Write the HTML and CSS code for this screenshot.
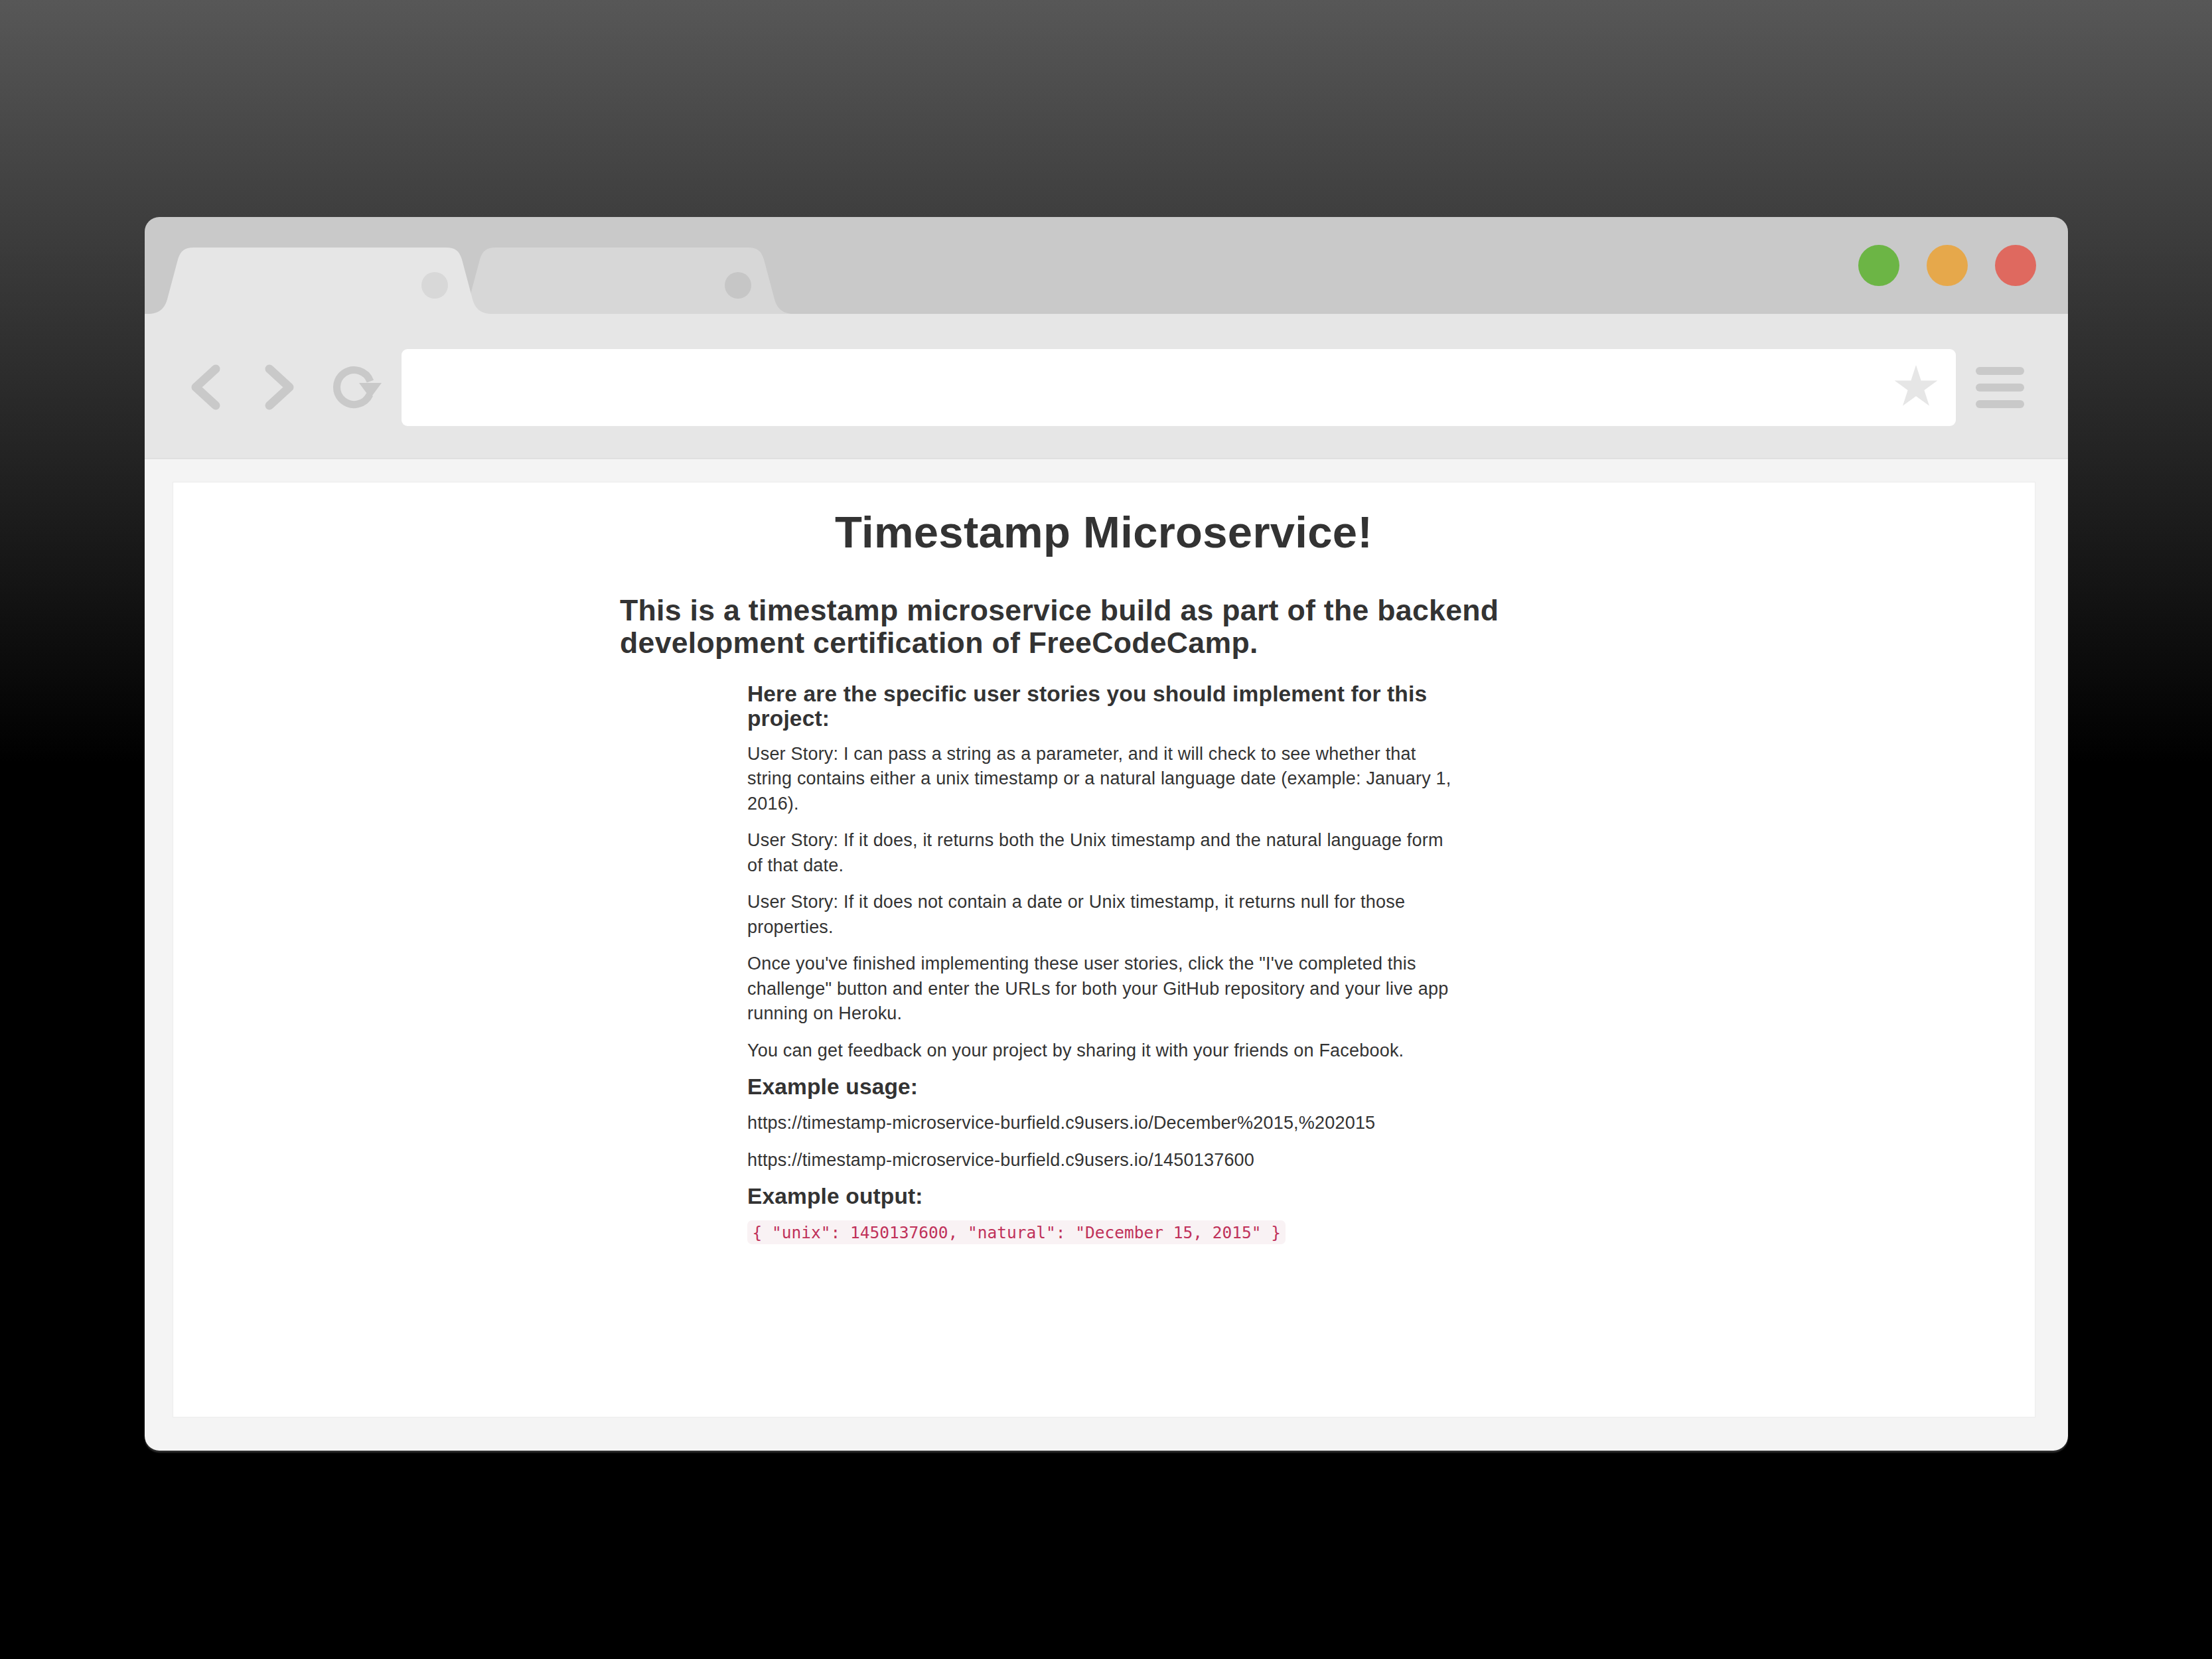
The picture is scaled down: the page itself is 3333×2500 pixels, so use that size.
FILE: index.html
```html
<!DOCTYPE html>
<html lang="en">
<head>
<meta charset="utf-8">
<title>Timestamp Microservice</title>
<link rel="stylesheet" href="styles.css">
</head>
<body>
<div class="window">
  <div class="tabbar">
    <svg class="tabs" width="1000" height="100" viewBox="0 0 1000 100">
      <path class="tab-back" transform="translate(455 0)" d="M4 100 C22 100 30 92 34 78 L50 18 C54 5 60 0 74 0 L454 0 C468 0 474 5 478 18 L494 78 C498 92 506 100 524 100 Z"/>
      <path class="tab-front" d="M4 100 C22 100 30 92 34 78 L50 18 C54 5 60 0 74 0 L454 0 C468 0 474 5 478 18 L494 78 C498 92 506 100 524 100 Z"/>
      <circle class="dot-front" cx="437" cy="57" r="20"/>
      <circle class="dot-back" cx="894" cy="57" r="20"/>
    </svg>
    <div class="lights">
      <span class="light green"></span>
      <span class="light yellow"></span>
      <span class="light red"></span>
    </div>
  </div>
  <div class="toolbar">
    <svg class="nav" width="300" height="80" viewBox="0 0 300 80">
      <polyline class="navline" points="40,12 10,39.5 40,67"/>
      <polyline class="navline" points="121,12 151,39.5 121,67"/>
      <path class="reload" d="M272.1 50.5 A26 26 0 1 1 272.9 30.6"/>
      <polygon class="reload-head" points="256,33 290,33 273,56"/>
    </svg>
    <div class="address">
      <svg class="star" width="70" height="70" viewBox="0 0 70 70">
        <polygon points="35,1 42.6,24.5 67.3,24.5 47.4,39 55,62.5 35,48 15,62.5 22.6,39 2.7,24.5 27.4,24.5"/>
      </svg>
    </div>
    <svg class="menu" width="73" height="62" viewBox="0 0 73 62">
      <line x1="6" y1="6" x2="67" y2="6"/>
      <line x1="6" y1="31" x2="67" y2="31"/>
      <line x1="6" y1="56" x2="67" y2="56"/>
    </svg>
  </div>
  <div class="viewport">
    <div class="page">
      <h1 class="title">Timestamp Microservice!</h1>
      <div class="intro">
        <h3 class="lead">This is a timestamp microservice build as part of the backend development certification of FreeCodeCamp.</h3>
      </div>
      <div class="details">
        <h4 class="sub">Here are the specific user stories you should implement for this project:</h4>
        <p class="text">User Story: I can pass a string as a parameter, and it will check to see whether that string contains either a unix timestamp or a natural language date (example: January 1, 2016).</p>
        <p class="text">User Story: If it does, it returns both the Unix timestamp and the natural language form of that date.</p>
        <p class="text">User Story: If it does not contain a date or Unix timestamp, it returns null for those properties.</p>
        <p class="text">Once you've finished implementing these user stories, click the "I've completed this challenge" button and enter the URLs for both your GitHub repository and your live app running on Heroku.</p>
        <p class="text">You can get feedback on your project by sharing it with your friends on Facebook.</p>
        <h4 class="sub">Example usage:</h4>
        <p class="text">https://timestamp-microservice-burfield.c9users.io/December%2015,%202015</p>
        <p class="text">https://timestamp-microservice-burfield.c9users.io/1450137600</p>
        <h4 class="sub">Example output:</h4>
        <p class="text"><code class="code">{ "unix": 1450137600, "natural": "December 15, 2015" }</code></p>
      </div>
    </div>
  </div>
</div>
</body>
</html>
```
FILE: styles.css
```css
html {
  background: #000;
}
body {
  margin: 0;
  padding-top: 327px;
  min-height: 2500px;
  box-sizing: border-box;
  background: linear-gradient(180deg, #575757 0px, #000000 1150px) no-repeat;
  background-color: #000;
  font-family: "Liberation Sans", Arial, Helvetica, sans-serif;
  color: #333333;
}

.window {
  width: 2898px;
  margin: 0 auto;
  border-radius: 22px;
  overflow: hidden;
  box-shadow: 0 3px 2px #2e2e2e;
}

/* ---------- tab strip ---------- */
.tabbar {
  height: 146px;
  background: #c9c9c9;
  display: flex;
  align-items: flex-start;
}
.tabs {
  display: block;
  margin-top: 46px;
}
.tab-front { fill: #e6e6e6; }
.tab-back { fill: #d7d7d7; }
.dot-front { fill: #d8d8d8; }
.dot-back { fill: #c6c6c6; }

.lights {
  margin-left: auto;
  margin-top: 42px;
  padding-right: 48px;
  display: flex;
  gap: 41px;
}
.light {
  display: block;
  width: 62px;
  height: 62px;
  border-radius: 50%;
}
.green { background: #6cb545; }
.yellow { background: #e6a84b; }
.red { background: #df695f; }

/* ---------- toolbar ---------- */
.toolbar {
  height: 219px;
  box-sizing: border-box;
  padding: 5px 0 0 67px;
  background: #e6e6e6;
  border-bottom: 2px solid #e0e0e0;
  display: flex;
  align-items: center;
}
.nav {
  display: block;
  flex: none;
}
.navline {
  fill: none;
  stroke: #c9c9c9;
  stroke-width: 13;
  stroke-linecap: round;
  stroke-linejoin: round;
}
.reload {
  fill: none;
  stroke: #c9c9c9;
  stroke-width: 11;
}
.reload-head { fill: #c9c9c9; }

.address {
  margin-left: 20px;
  width: 2342px;
  height: 116px;
  flex: none;
  box-sizing: border-box;
  background: #ffffff;
  border-radius: 9px;
  display: flex;
  align-items: center;
  justify-content: flex-end;
  padding-right: 25px;
}
.star {
  display: block;
  fill: #e6e6e6;
}
.menu {
  display: block;
  flex: none;
  margin-left: 30px;
  stroke: #c9c9c9;
  stroke-width: 12;
  stroke-linecap: round;
}

/* ---------- page ---------- */
.viewport {
  background: #f4f4f4;
  padding: 35px 50px 51px 43px;
}
.page {
  height: 1408px;
  background: #ffffff;
  box-shadow: 0 0 0 1px #ececec;
  display: flex;
  flex-direction: column;
  align-items: center;
}

.title {
  margin: 38px 0 18.6px;
  font-size: 67px;
  line-height: 74px;
  font-weight: 700;
  letter-spacing: 0.3px;
  text-align: center;
}

.intro {
  width: 1458px;
}
.lead {
  margin: 37px 0 18.6px;
  font-size: 44.6px;
  line-height: 49px;
  font-weight: 700;
  letter-spacing: 0.3px;
}

.details {
  width: 1074px;
}
.sub {
  margin: 17px 0 16.5px;
  font-size: 33.5px;
  line-height: 36.8px;
  font-weight: 700;
  letter-spacing: 0.15px;
}
.text {
  margin: 0 0 18.6px;
  font-size: 27px;
  line-height: 37.2px;
  letter-spacing: 0.2px;
}
.code {
  font-family: "DejaVu Sans Mono", "Liberation Mono", monospace;
  font-size: 24.5px;
  letter-spacing: 0;
  padding: 3.7px 7.4px;
  color: #c0315a;
  background: #f9f2f4;
  border-radius: 7px;
}
```
